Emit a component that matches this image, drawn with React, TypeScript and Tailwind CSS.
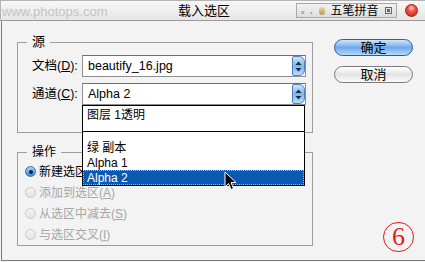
import React from "react";

const FONT = { fontFamily: '"Liberation Sans", "Noto Sans CJK SC", sans-serif' };

function Stepper() {
  return (
    <div className="w-[13px] h-[20px] rounded-r-[6px] rounded-l-[2px] border border-[#4f7fbf] bg-gradient-to-b from-[#cfe4fb] via-[#7fb5ee] to-[#b9dcfb] flex items-center justify-center">
      <svg width="7" height="11" viewBox="0 0 7 11">
        <path d="M3.5 0.5 L6.5 4 L0.5 4 Z" fill="#1b2a44" />
        <path d="M3.5 10.5 L6.5 7 L0.5 7 Z" fill="#1b2a44" />
      </svg>
    </div>
  );
}

function Combo({ text }: { text: string }) {
  return (
    <div className="flex-1 h-[22px] flex items-center bg-white border border-[#8e8e8e] border-t-[#6f6f6f] pl-[5px]">
      <span className="flex-1 text-[12.5px] text-black leading-none">{text}</span>
      <Stepper />
    </div>
  );
}

function Radio({ checked, disabled, children }: { checked?: boolean; disabled?: boolean; children: React.ReactNode }) {
  return (
    <div className="h-[21px] flex items-center gap-[3px]">
      {checked ? (
        <div className="w-[11px] h-[11px] rounded-full border border-[#3a6bb0] bg-gradient-to-b from-[#a9d0f7] to-[#3d88dc] flex items-center justify-center">
          <div className="w-[4px] h-[4px] rounded-full bg-[#10203a]" />
        </div>
      ) : (
        <div className="w-[11px] h-[11px] rounded-full border border-[#c8c8c8] bg-gradient-to-b from-[#f4f4f4] to-[#e2e2e2]" />
      )}
      <span className={"text-[12px] leading-none " + (disabled ? "text-[#a6a6a6]" : "text-black")}>{children}</span>
    </div>
  );
}

export default function App() {
  return (
    <div className="relative w-[425px] h-[262px] overflow-hidden bg-[#f3f3f3] flex flex-col" style={FONT}>
      {/* title bar */}
      <div className="h-[21px] flex items-center border-b border-[#9a9a9a] border-t border-t-[#b4b4b4] border-l border-l-[#b4b4b4] bg-gradient-to-b from-[#f7f7f7] to-[#e6e6e6]">
        <div className="w-[177px] pl-[1px]">
          <span className="text-[13px] text-[#c4c4c4] leading-none">www.photops.com</span>
        </div>
        <span className="text-[13px] text-black leading-none">载入选区</span>
        <div className="flex-1" />
        <div className="w-[101px] h-[15px] mr-[8px] flex items-center border border-[#a8a8a8] bg-gradient-to-b from-[#f2f2f2] to-[#dedede]">
          <span className="ml-[4px] text-[9px] text-[#666] leading-none">。,</span>
          <div className="ml-[6px] w-[6px] h-[8px] rounded-full bg-gradient-to-b from-[#e8d9a8] to-[#b89a4a]" />
          <span className="ml-[6px] text-[12px] text-black leading-none">五笔拼音</span>
          <div className="ml-[6px] w-[7px] h-[7px] border border-[#666] flex items-center justify-center">
            <div className="w-[3px] h-[3px] bg-[#666]" />
          </div>
        </div>
        <div className="w-[13px] h-[13px] mr-[7px] rounded-full border border-[#9b1d1d] bg-[radial-gradient(circle_at_50%_30%,#ffd0c8_0%,#f05a4a_35%,#c21a14_100%)]" />
      </div>

      {/* body */}
      <div className="flex-1 ml-[1px] mb-[1px] border-l border-b border-[#7d7d7d] flex pl-[15px] pt-[13px]">
        <div className="w-[296px] flex flex-col">
          <fieldset className="border border-[#9c9c9c]">
            <legend className="ml-[9px] px-[5px] text-[13px] leading-[16px] text-black">源</legend>
            <div className="pl-[14px] pr-[6px] pt-[5px] pb-[27px] flex flex-col gap-[6px]">
              <div className="flex items-center">
                <span className="w-[50px] text-[12.5px] text-black leading-none">
                  文档(<span className="underline">D</span>):
                </span>
                <Combo text="beautify_16.jpg" />
              </div>
              <div className="flex items-center">
                <span className="w-[50px] text-[12.5px] text-black leading-none">
                  通道(<span className="underline">C</span>):
                </span>
                <Combo text="Alpha 2" />
              </div>
            </div>
          </fieldset>
          <fieldset className="mt-[11px] border border-[#9c9c9c]">
            <legend className="ml-[9px] px-[5px] text-[12px] leading-[16px] text-black">操作</legend>
            <div className="pl-[7px] pt-[1px] flex flex-col">
              <Radio checked>新建选区</Radio>
              <Radio disabled>
                添加到选区(<span className="underline">A</span>)
              </Radio>
              <Radio disabled>
                从选区中减去(<span className="underline">S</span>)
              </Radio>
              <Radio disabled>
                与选区交叉(<span className="underline">I</span>)
              </Radio>
            </div>
          </fieldset>
        </div>

        <div className="ml-[21px] mt-[5px] flex flex-col gap-[10px]">
          <div className="w-[79px] h-[17px] rounded-full border border-[#2e5c9c] bg-gradient-to-b from-[#d3e7fc] via-[#6ea9ea] to-[#b5dafc] flex items-center justify-center">
            <span className="text-[13px] text-black leading-none">确定</span>
          </div>
          <div className="w-[79px] h-[17px] rounded-full border border-[#7a7a7a] bg-gradient-to-b from-[#ffffff] via-[#e4e4e4] to-[#fbfbfb] flex items-center justify-center">
            <span className="text-[13px] text-black leading-none">取消</span>
          </div>
        </div>
      </div>

      {/* open dropdown list */}
      <div className="absolute left-[82px] top-[105px] w-[223px] border border-black bg-white flex flex-col">
        <div className="h-[16px] pt-[1px] pl-[4px] flex items-center text-[12px] leading-none text-black">图层 1透明</div>
        <div className="h-[9px]" />
        <div className="h-[1px] bg-black" />
        <div className="h-[8px]" />
        <div className="h-[15px] pl-[4px] flex items-center text-[12px] leading-none text-black">绿 副本</div>
        <div className="h-[15px] pl-[4px] flex items-center text-[12px] leading-none text-black">Alpha 1</div>
        <div className="h-[15px] pl-[3px] flex items-center text-[12px] leading-none text-white bg-[#0c59b4] border border-dotted border-[#9fb9db]">Alpha 2</div>
      </div>

      {/* mouse cursor */}
      <svg className="absolute left-[224px] top-[171px]" width="13" height="20" viewBox="0 0 13 20">
        <path d="M1 1 L1 16 L4.5 12.5 L7 18.5 L9.5 17.5 L7 11.5 L12 11.5 Z" fill="#000" stroke="#fff" strokeWidth="1" />
      </svg>

      {/* annotation */}
      <div className="absolute left-[383px] top-[222px] w-[31px] h-[30px] rounded-full border border-[#e31b1b] flex items-center justify-center">
        <span className="text-[26px] leading-none text-[#e31b1b]" style={{ fontFamily: '"Liberation Serif", serif' }}>6</span>
      </div>
    </div>
  );
}
